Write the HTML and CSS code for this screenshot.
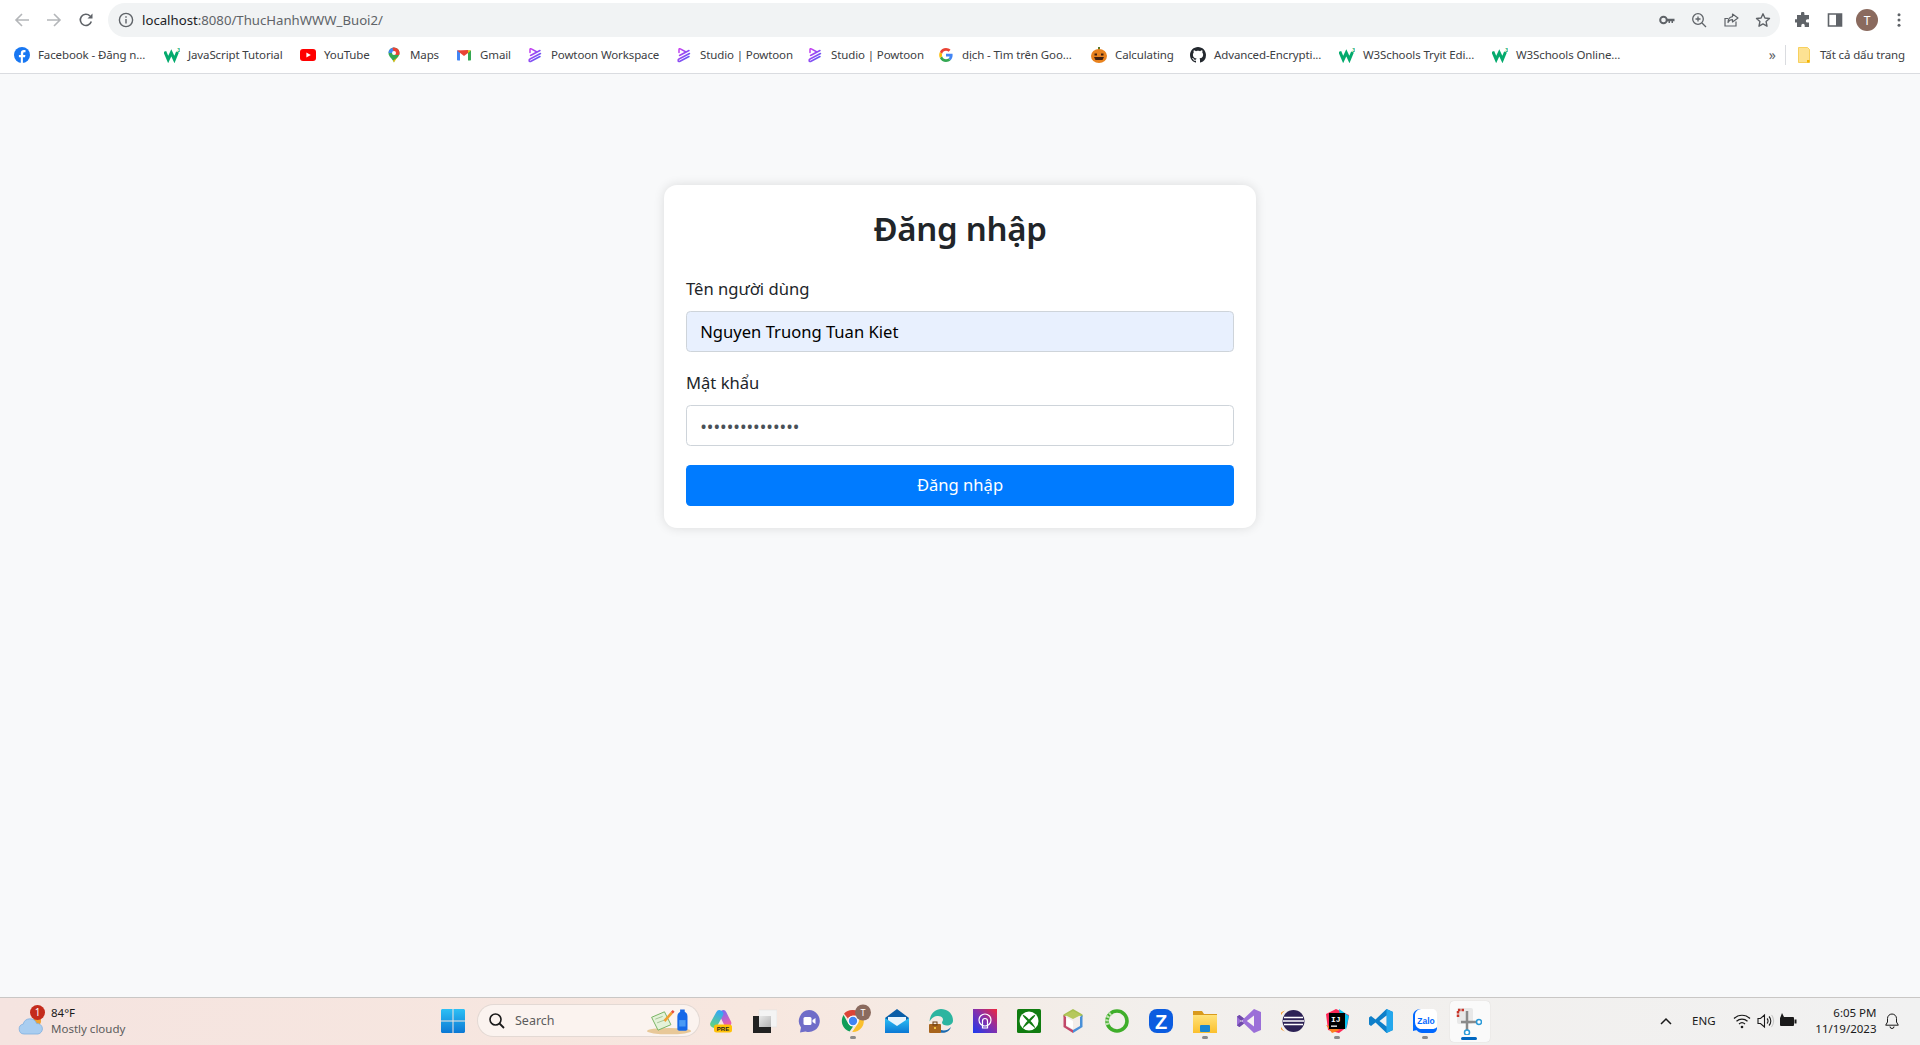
FILE: index.html
```html
<!DOCTYPE html>
<html lang="vi">
<head>
    <meta charset="UTF-8">
    <meta name="viewport" content="width=device-width, initial-scale=1.0">
    <title>Đăng nhập</title>
    <link rel="stylesheet" href="styles.css">
</head>
<body>
    <svg class="sprites" aria-hidden="true">
        <defs>
            <linearGradient id="powtoonGrad" x1="0" y1="0" x2="1" y2="1">
                <stop offset="0" stop-color="#d13cf0"/>
                <stop offset="1" stop-color="#4a5cf5"/>
            </linearGradient>
            <linearGradient id="copilotLeft" gradientUnits="userSpaceOnUse" x1="11" y1="3" x2="5" y2="17">
                <stop offset="0" stop-color="#35a8f1"/>
                <stop offset="1" stop-color="#5fd08a"/>
            </linearGradient>
            <linearGradient id="copilotRight" gradientUnits="userSpaceOnUse" x1="13" y1="3" x2="18" y2="15">
                <stop offset="0" stop-color="#7f6bf0"/>
                <stop offset="1" stop-color="#e85fb0"/>
            </linearGradient>
            <linearGradient id="blueGrad" x1="0" y1="0" x2="0" y2="1">
                <stop offset="0" stop-color="#2dc0f5"/>
                <stop offset="1" stop-color="#0b78d4"/>
            </linearGradient>
            <linearGradient id="filesGrad" x1="0" y1="0" x2="0" y2="1">
                <stop offset="0" stop-color="#ffe27a"/>
                <stop offset="1" stop-color="#fbc02d"/>
            </linearGradient>
            <linearGradient id="tileGrad" x1="0" y1="0" x2="1" y2="1">
                <stop offset="0" stop-color="#e8e8e8"/>
                <stop offset="1" stop-color="#b4b4b4"/>
            </linearGradient>
            <linearGradient id="podcastGrad" x1="0" y1="1" x2="1" y2="0">
                <stop offset="0" stop-color="#1b3bf0"/>
                <stop offset="0.55" stop-color="#8a2fa8"/>
                <stop offset="1" stop-color="#f0283c"/>
            </linearGradient>
            <clipPath id="pinClip">
                <path d="M8 .5A5.500 5.500 0 0 0 2.500 6c0 4 4 5.500 5.500 9.500C9.500 11.500 13.500 10 13.500 6A5.500 5.500 0 0 0 8 .5z"/>
            </clipPath>
            <symbol id="w3" viewBox="0 0 16 16">
                <path d="M.8 4.500L4.200 12.500 7.300 5.800 10.400 12.500 13.500 5" fill="none" stroke="#04aa6d" stroke-width="3"/>
                <text class="w3-sup" x="13.200" y="4.500">3</text>
            </symbol>
            <symbol id="powtoon" viewBox="0 0 16 16">
                <path d="M3 5.500V2.500c0-.8.7-1 1.300-.7L10 5 3.500 8.500 13 3.500M13.500 6.500L3 12c-1.500.8-1 3 .5 2.500L13 9.500" fill="none" stroke="url(#powtoonGrad)" stroke-width="1.500" stroke-linecap="round" stroke-linejoin="round"/>
            </symbol>
        </defs>
    </svg>

    <div class="toolbar">
        <button class="tool-btn muted">
            <svg width="16" height="16" viewBox="0 0 16 16"><path d="M15 8H2.500M8 2L2 8l6 6" fill="none" stroke="currentColor" stroke-width="1.600"/></svg>
        </button>
        <button class="tool-btn muted">
            <svg width="16" height="16" viewBox="0 0 16 16"><path d="M1 8h12.500M8 2l6 6-6 6" fill="none" stroke="currentColor" stroke-width="1.600"/></svg>
        </button>
        <button class="tool-btn">
            <svg width="16" height="16" viewBox="0 0 16 16"><path d="M13.300 9.500A5.600 5.600 0 1 1 12 4" fill="none" stroke="currentColor" stroke-width="1.600"/><path d="M14.500 1.500v5h-5z" fill="currentColor"/></svg>
        </button>
        <div class="omnibox">
            <svg class="info-icon" width="16" height="16" viewBox="0 0 16 16"><circle cx="8" cy="8" r="6.600" fill="none" stroke="currentColor" stroke-width="1.400"/><path d="M7.300 7h1.400v4.600H7.300zM7.300 4.300h1.400v1.500H7.300z" fill="currentColor"/></svg>
            <div class="url"><span class="url-host">localhost</span>:8080/ThucHanhWWW_Buoi2/</div>
            <div class="omni-actions">
                <button class="tool-btn">
                    <svg width="16" height="16" viewBox="0 0 16 16"><circle cx="4.500" cy="8" r="3.300" fill="none" stroke="currentColor" stroke-width="2"/><path d="M7.500 6.800H15.500V9.300H14V11H12.500V9.300H11V11H9.500V9.300H7.500z" fill="currentColor"/></svg>
                </button>
                <button class="tool-btn">
                    <svg width="16" height="16" viewBox="0 0 16 16"><circle cx="7" cy="7" r="5.300" fill="none" stroke="currentColor" stroke-width="1.300"/><path d="M11 11l4 4M7 4.500v5M4.500 7h5" fill="none" stroke="currentColor" stroke-width="1.300"/></svg>
                </button>
                <button class="tool-btn">
                    <svg width="16" height="16" viewBox="0 0 16 16"><path d="M13 9.500V14H2V6.500h3" fill="none" stroke="currentColor" stroke-width="1.200"/><path d="M9.500 2l5.500 4-5.500 4V7.700C7.500 7.700 6 8.500 5 10.500c0-3.500 1.800-5.500 4.500-5.900z" fill="none" stroke="currentColor" stroke-width="1.200" stroke-linejoin="round"/></svg>
                </button>
                <button class="tool-btn">
                    <svg width="16" height="16" viewBox="0 0 16 16"><path d="M8 1.800l1.900 4.200 4.600.5-3.400 3.100.9 4.600L8 11.900l-4 2.300.9-4.600L1.500 6.500 6.100 6z" fill="none" stroke="currentColor" stroke-width="1.400" stroke-linejoin="round"/></svg>
                </button>
            </div>
        </div>
        <div class="toolbar-end">
            <button class="tool-btn">
                <svg width="16" height="16" viewBox="0 0 16 16"><path d="M6 1.500a1.700 1.700 0 0 1 3.400 0V3H14v4.200h-1.500a1.700 1.700 0 0 0 0 3.400H14V15H9.700v-1.500a1.700 1.700 0 0 0-3.400 0V15H2v-4.400H.8a1.700 1.700 0 0 1 0-3.400H2V3h4z" fill="currentColor"/></svg>
            </button>
            <button class="tool-btn">
                <svg width="16" height="16" viewBox="0 0 16 16"><path d="M1.500 2h13v12h-13z" fill="#fff" stroke="currentColor" stroke-width="1.600"/><path d="M9 2h5.500v12H9z" fill="currentColor"/></svg>
            </button>
            <button class="tool-btn">
                <span class="avatar">T</span>
            </button>
            <button class="tool-btn">
                <svg width="16" height="16" viewBox="0 0 16 16"><circle cx="8" cy="2.800" r="1.500" fill="currentColor"/><circle cx="8" cy="8" r="1.500" fill="currentColor"/><circle cx="8" cy="13.200" r="1.500" fill="currentColor"/></svg>
            </button>
        </div>
    </div>

    <div class="bookmarks">
        <div class="bm-list">
            <div class="bm">
                <svg width="16" height="16" viewBox="0 0 16 16"><circle cx="8" cy="8" r="8" fill="#1877f2"/><path d="M6.800 16V10.300H4.900V8h1.900V6.200c0-2 1.200-3.100 3-3.100.9 0 1.700.1 1.700.1v2h-1c-1 0-1.300.6-1.300 1.200V8h2.200l-.4 2.300H8.900V16z" fill="#fff"/></svg>
                <span>Facebook - Đăng n...</span>
            </div>
            <div class="bm"><svg width="16" height="16"><use href="#w3"/></svg><span>JavaScript Tutorial</span></div>
            <div class="bm">
                <svg width="16" height="16" viewBox="0 0 16 16"><rect y="2" width="16" height="12" rx="3" fill="#f00"/><path d="M6.400 5.500L10.800 8l-4.400 2.500z" fill="#fff"/></svg>
                <span>YouTube</span>
            </div>
            <div class="bm">
                <svg width="16" height="16" viewBox="0 0 16 16">
                    <g clip-path="url(#pinClip)">
                        <rect width="16" height="16" fill="#34a853"/>
                        <path d="M0 0h8v6H0z" fill="#4285f4"/>
                        <path d="M6 0h10v8H9z" fill="#ea4335"/>
                        <path d="M16 7L4 16h12z" fill="#fbbc04"/>
                    </g>
                    <circle cx="8" cy="6" r="2" fill="#fff"/>
                </svg>
                <span>Maps</span>
            </div>
            <div class="bm">
                <svg width="16" height="16" viewBox="0 0 16 16"><path d="M1 3.500h3v10H2c-.6 0-1-.4-1-1z" fill="#4285f4"/><path d="M12 3.500h3v9c0 .6-.4 1-1 1h-2z" fill="#34a853"/><path d="M1 3.500l7 5.500 4-3.100V3z" fill="#ea4335"/><path d="M12 3.500h3L12 6z" fill="#fbbc04"/></svg>
                <span>Gmail</span>
            </div>
            <div class="bm"><svg width="16" height="16"><use href="#powtoon"/></svg><span>Powtoon Workspace</span></div>
            <div class="bm"><svg width="16" height="16"><use href="#powtoon"/></svg><span>Studio | Powtoon</span></div>
            <div class="bm"><svg width="16" height="16"><use href="#powtoon"/></svg><span>Studio | Powtoon</span></div>
            <div class="bm">
                <svg width="16" height="16" viewBox="0 0 16 16"><path d="M14.600 8.200c0-.5 0-1-.1-1.400H8v2.700h3.700c-.2.900-.6 1.600-1.300 2.100l2.100 1.600c1.300-1.200 2.100-2.900 2.100-5z" fill="#4285f4"/><path d="M8 15c1.900 0 3.400-.6 4.500-1.700l-2.100-1.700c-.6.400-1.400.7-2.400.7-1.800 0-3.400-1.300-3.900-3L1.900 11C3 13.400 5.300 15 8 15z" fill="#34a853"/><path d="M4.100 9.300C4 8.900 3.900 8.400 3.900 8s.1-.9.200-1.300L1.900 5C1.400 5.900 1.200 6.900 1.200 8s.2 2.100.7 3z" fill="#fbbc05"/><path d="M8 3.700c1 0 1.900.4 2.600 1l1.900-1.900C11.400 1.700 9.800 1 8 1 5.300 1 3 2.600 1.900 5l2.200 1.700c.5-1.700 2.100-3 3.900-3z" fill="#ea4335"/></svg>
                <span>dịch - Tìm trên Goo...</span>
            </div>
            <div class="bm">
                <svg width="16" height="16" viewBox="0 0 16 16"><rect x="7" y="0" width="2" height="3.500" fill="#5a7a2a"/><ellipse cx="8" cy="9" rx="8" ry="7" fill="#e8821e"/><path d="M3.500 6.500h2.500v2H3.500zM10 6.500h2.500v2H10zM3 10h10L11.500 13h-7z" fill="#402010"/></svg>
                <span>Calculating</span>
            </div>
            <div class="bm">
                <svg width="16" height="16" viewBox="0 0 16 16"><path fill="#24292f" d="M8 0C3.580 0 0 3.580 0 8c0 3.540 2.290 6.530 5.470 7.590.4.070.55-.170.55-.380 0-.190-.010-.820-.010-1.490-2.010.370-2.530-.490-2.690-.940-.090-.230-.480-.940-.820-1.130-.280-.150-.680-.520-.010-.530.630-.010 1.080.580 1.230.820.720 1.210 1.870.870 2.330.660.070-.520.280-.870.510-1.070-1.780-.200-3.640-.890-3.640-3.950 0-.870.310-1.590.820-2.150-.080-.200-.360-1.020.080-2.120 0 0 .670-.210 2.200.820.640-.180 1.320-.270 2-.270.680 0 1.360.090 2 .270 1.530-1.040 2.200-.820 2.200-.820.440 1.100.160 1.920.080 2.120.510.560.820 1.270.820 2.150 0 3.070-1.870 3.750-3.650 3.950.290.250.540.730.540 1.480 0 1.070-.010 1.930-.010 2.200 0 .210.150.460.550.380A8.013 8.013 0 0 0 16 8c0-4.420-3.580-8-8-8z"/></svg>
                <span>Advanced-Encrypti...</span>
            </div>
            <div class="bm"><svg width="16" height="16"><use href="#w3"/></svg><span>W3Schools Tryit Edi...</span></div>
            <div class="bm"><svg width="16" height="16"><use href="#w3"/></svg><span>W3Schools Online...</span></div>
        </div>
        <div class="bm-end">
            <span class="bm-more">»</span>
            <span class="bm-sep"></span>
            <div class="bm">
                <svg width="16" height="16" viewBox="0 0 16 16"><path d="M2.500 .5h9l2 2V15.500h-11z" fill="#fde293" stroke="#f5c842" stroke-width=".8"/><path d="M11 13h2.500v2.500H11z" fill="#f5b400"/></svg>
                <span>Tất cả dấu trang</span>
            </div>
        </div>
    </div>

    <main class="page">
        <div class="login-card">
            <h2>Đăng nhập</h2>
            <form>
                <div class="form-group">
                    <label for="username">Tên người dùng</label>
                    <input class="form-control autofilled" id="username" type="text" value="Nguyen Truong Tuan Kiet">
                </div>
                <div class="form-group">
                    <label for="password">Mật khẩu</label>
                    <input class="form-control password" id="password" type="password" value="123456789012345">
                </div>
                <button class="btn-submit" type="button">Đăng nhập</button>
            </form>
        </div>
    </main>

    <footer class="taskbar">
        <div class="weather">
            <svg class="weather-icon" width="28" height="24" viewBox="0 0 28 24"><circle cx="20" cy="8" r="4" fill="#f0a030"/><path d="M7 21a5 5 0 0 1-.8-9.900 7 7 0 0 1 13.400-.6A5.300 5.300 0 0 1 21 21z" fill="#a9cdf0" stroke="#7fb0e0" stroke-width=".8"/></svg>
            <span class="weather-badge">1</span>
            <div class="weather-text">
                <div class="weather-temp">84°F</div>
                <div class="weather-desc">Mostly cloudy</div>
            </div>
        </div>

        <svg class="start-icon" width="24" height="24" viewBox="0 0 24 24">
            <path d="M0 1.500C0 .700.700 0 1.500 0H11.500V11.500H0zM12.500 0H22.500C23.300 0 24 .700 24 1.500V11.500H12.500zM0 12.500H11.500V24H1.500C.700 24 0 23.300 0 22.500zM12.500 12.500H24V22.500C24 23.300 23.300 24 22.500 24H12.500z" fill="url(#blueGrad)"/>
        </svg>

        <div class="search">
            <svg width="18" height="18" viewBox="0 0 18 18"><circle cx="7.500" cy="7.500" r="5.500" fill="none" stroke="#1a1a1a" stroke-width="1.600"/><path d="M11.500 11.500L16 16" stroke="#1a1a1a" stroke-width="1.800"/></svg>
            <span class="search-label">Search</span>
            <svg class="search-art" width="46" height="28" viewBox="0 0 50 30">
                <ellipse cx="24" cy="26" rx="24" ry="3.500" fill="#e8c898"/>
                <path d="M5 11l14-6 7 14-14 6z" fill="#e4f2d8" stroke="#6fae5a" stroke-width="1"/>
                <path d="M9 13l8-3M11 17l8-3" stroke="#9fbf90" stroke-width="1"/>
                <path d="M18 14l8-9 2 2-8 9z" fill="#f0a030"/>
                <path d="M26 5l2-2 2 2-2 2z" fill="#e84e3c"/>
                <path d="M33 24V10c0-3 2-4 3-5V2.500h5V5c1.500 1 3 2 3 5v14c0 1-1 1.500-2 1.500h-7c-1 0-2-.5-2-1.500z" fill="#1668e8"/>
                <path d="M35 14h7v7h-7z" fill="#4a9af5"/>
            </svg>
        </div>

        <div class="apps">
            <div class="app">
                <svg width="24" height="24" viewBox="0 0 24 24">
                    <path d="M14 5l4.500 9" fill="none" stroke="url(#copilotRight)" stroke-width="7.500" stroke-linecap="round"/>
                    <path d="M10.500 5L5 15" fill="none" stroke="url(#copilotLeft)" stroke-width="7.500" stroke-linecap="round"/>
                    <rect x="5" y="15.500" width="18" height="8" rx="2.500" fill="#ffc107"/>
                    <text class="pre-text" x="14" y="21.800" text-anchor="middle">PRE</text>
                </svg>
            </div>
            <div class="app">
                <svg width="24" height="24" viewBox="0 0 24 24"><path d="M6 1h18v17H6z" fill="#f4f4f4" stroke="#e2e2e2" stroke-width=".6"/><path d="M0 7h18v17H0z" fill="#222"/><path d="M6 7h12v11H6z" fill="url(#tileGrad)"/></svg>
            </div>
            <div class="app">
                <svg width="24" height="24" viewBox="0 0 24 24"><path d="M12 1a11 11 0 1 1-3.500 21.500L3 23.500l1-5A11 11 0 0 1 12 1z" fill="#6f6dc8"/><rect x="6.500" y="8" width="8" height="8" rx="1.500" fill="#fff"/><path d="M15.500 11l3-2v6l-3-2z" fill="#fff"/></svg>
            </div>
            <div class="app">
                <svg class="app-overflow" width="24" height="24" viewBox="0 0 24 24">
                    <path d="M12 1a11 11 0 0 1 9.500 5.500H12a5.500 5.500 0 0 0-5 3.200L3 4.700A11 11 0 0 1 12 1z" fill="#db4437"/>
                    <path d="M2.600 6l4.700 8.700a5.500 5.500 0 0 0 4.800 2.800l-3.500 5A11 11 0 0 1 2.600 6z" fill="#0f9d58"/>
                    <path d="M21.900 7.500h-5.400a5.500 5.500 0 0 1 .3 7.200L11.200 23A11 11 0 0 0 21.900 7.500z" fill="#fbc02d"/>
                    <circle cx="12" cy="12" r="5.200" fill="#fff"/>
                    <circle cx="12" cy="12" r="4.200" fill="#4285f4"/>
                    <circle cx="22" cy="3.500" r="8" fill="#8a6a5e"/>
                    <text class="chrome-t" x="22" y="6.700" text-anchor="middle">T</text>
                </svg>
                <span class="app-dot"></span>
            </div>
            <div class="app">
                <svg width="24" height="24" viewBox="0 0 24 24"><path d="M0 9L12 0l12 9v15H0z" fill="#0a5ea8"/><path d="M3 8h18v7l-9 5-9-5z" fill="#e8f4fc"/><path d="M0 9l12 8 12-8v15H0z" fill="url(#blueGrad)"/></svg>
            </div>
            <div class="app">
                <svg width="24" height="24" viewBox="0 0 24 24"><path d="M12 0c7 0 12 5 12 11.500 0 3.500-3 5-6 5-2.500 0-5-1-5-3 0-1 1-1.500 1-3 0-2.500-3-4-6-3.500C4 7.500 2 10 .5 12.500 1 5 6 0 12 0z" fill="#2cb5a0"/><path d="M12 21c3 1 7 .5 10-3-2 6-7 6-11 5.500z" fill="#1a6ab0"/><rect x="0" y="15" width="12" height="9" rx="1" fill="#a8641c"/><rect x="4" y="13" width="4" height="3" fill="none" stroke="#6a3d10"/><rect x="5" y="18" width="2" height="2" fill="#f0c040"/></svg>
            </div>
            <div class="app">
                <svg width="24" height="24" viewBox="0 0 24 24"><rect width="24" height="24" fill="url(#podcastGrad)"/><circle cx="12" cy="11" r="6" fill="none" stroke="#fff" stroke-width="1.200"/><path d="M9.500 19v-7a2.500 2.500 0 0 1 5 0v7z" fill="none" stroke="#fff" stroke-width="1.200"/></svg>
            </div>
            <div class="app">
                <svg width="24" height="24" viewBox="0 0 24 24"><rect width="24" height="24" rx="1.500" fill="#107c10"/><circle cx="12" cy="12" r="9.500" fill="#fff"/><path d="M5.500 5.500c3 1 5 3.500 6.500 5 1.500-1.500 3.500-4 6.500-5-1 3-3.500 5-5 6.500 2 2 4 4.500 5 7.500L12 14 5.500 19.500c1-3 3-5.500 5-7.500-1.500-1.500-4-3.500-5-6.500z" fill="#107c10"/></svg>
            </div>
            <div class="app">
                <svg width="24" height="24" viewBox="0 0 24 24"><path d="M12 0l9.500 5.500V8L12 3 2.500 8V5.500z" fill="#a8c050"/><path d="M4 6l8-4 8 4-8 4z" fill="#b6c85c"/><path d="M2.500 6v12L12 24v-3L5 17V8z" fill="#c2486a"/><path d="M21.500 6v12L12 24v-3l7-4V8z" fill="#4a90d8"/><path d="M5.500 8.500L12 12v8l-6.500-3.500z" fill="#fff"/></svg>
            </div>
            <div class="app">
                <svg width="24" height="24" viewBox="0 0 24 24"><circle cx="12" cy="12" r="10" fill="none" stroke="#3fae2a" stroke-width="3.600"/><path d="M6 4.500A10 10 0 0 0 3 17" fill="none" stroke="#bfe3b0" stroke-width="3.600" stroke-dasharray="2 1.500"/></svg>
            </div>
            <div class="app">
                <svg width="24" height="24" viewBox="0 0 24 24"><rect width="24" height="24" rx="8" fill="#0b5ce0"/><text class="zoho-z" x="12" y="19.500" text-anchor="middle">Z</text></svg>
            </div>
            <div class="app">
                <svg width="24" height="24" viewBox="0 0 24 24"><path d="M0 2h9l2 3h13v19H0z" fill="#d99a1c"/><path d="M0 6h24v18H0z" fill="url(#filesGrad)"/><rect x="7" y="16" width="10" height="7" rx="1" fill="#1a86d0"/></svg>
                <span class="app-dot"></span>
            </div>
            <div class="app">
                <svg width="24" height="24" viewBox="0 0 24 24"><path d="M17 0l7 3v18l-7 3-10-9.500L2.500 18 0 16.500v-9L2.500 6 7 9.500z" fill="#9b6fd8"/><path d="M17 6.500v11L9.800 12z" fill="#f5f2f2"/><path d="M3 9v6l3-3z" fill="#f5f2f2"/><path d="M0 7.500L2.500 6 7 9.500 4 12zM0 16.500L2.500 18 7 14.500 4 12z" fill="#6f4aa8"/></svg>
            </div>
            <div class="app">
                <svg width="24" height="24" viewBox="0 0 24 24"><circle cx="12.500" cy="12" r="11" fill="#2c2255"/><path d="M4 1.500A11 11 0 0 0 4 22.500 13 13 0 0 1 4 1.500z" fill="#f7941e"/><path d="M3 8.500h19M2 12h21M3 15.500h19" stroke="#fff" stroke-width="1.300"/></svg>
            </div>
            <div class="app">
                <svg width="24" height="24" viewBox="0 0 24 24"><path d="M1 5l10-5 13 6-2 12-8 6-11-3z" fill="#fe2857"/><path d="M14 0l10 7-3 14-6-14z" fill="#07c3f2"/><path d="M1 16l6 8 8-3z" fill="#fc801d"/><rect x="4" y="4" width="16" height="16" fill="#000"/><text class="ij-text" x="6" y="12.500">IJ</text><rect x="6" y="16.500" width="6" height="1.300" fill="#fff"/></svg>
                <span class="app-dot"></span>
            </div>
            <div class="app">
                <svg width="24" height="24" viewBox="0 0 24 24"><path d="M17.500 0L24 3v18l-6.500 3-11-10.500L2 17 0 15.500v-7L2 7l4.500 3.500z" fill="#0e7fc9"/><path d="M17.500 0L24 3v18l-6.500 3z" fill="#24a7ec"/><path d="M17.500 6.500L10.500 12l7 5.500z" fill="#f2f2f2"/></svg>
            </div>
            <div class="app">
                <svg width="24" height="24" viewBox="0 0 24 24"><path d="M8 0C3 0 0 3 0 7v10c0 2 .5 3-1 5 2 0 4-1 5-.5 1 1.500 3 2.500 5 2.500h10c3 0 5-2 5-5v-1H8z" fill="#0068ff"/><path d="M8 0h11c3 0 5 2 5 5v13c-1 1.500-3 2-5 2H7c-3-1-5-3.500-5-7V6c0-3 3-6 6-6z" fill="#fff"/><text class="zalo-text" x="13" y="14.500" text-anchor="middle">Zalo</text></svg>
                <span class="app-dot"></span>
            </div>
            <div class="app app-active">
                <svg width="26" height="28" viewBox="0 0 26 28"><rect x="1" y="1" width="16" height="16" rx="2" fill="#e8e8e8"/><path d="M2 10V3h7" fill="none" stroke="#c8352a" stroke-width="2.500" stroke-dasharray="2.500 1"/><path d="M11 4v23M5 15h18" stroke="#8a8a8a" stroke-width="2.500"/><circle cx="23" cy="15" r="2.500" fill="#fff" stroke="#2a9ad8" stroke-width="1.500"/><circle cx="11" cy="25.500" r="2.500" fill="#fff" stroke="#2a9ad8" stroke-width="1.500"/></svg>
                <span class="app-bar"></span>
            </div>
        </div>

        <div class="tray">
            <svg class="tray-caret" width="14" height="10" viewBox="0 0 14 10"><path d="M2 8l5-5 5 5" fill="none" stroke="#1a1a1a" stroke-width="1.500"/></svg>
            <span class="tray-lang">ENG</span>
            <svg class="tray-wifi" width="18" height="16" viewBox="0 0 18 16"><path d="M1 5.500a11.500 11.500 0 0 1 16 0M3.500 8.300a8 8 0 0 1 11 0M6 11a4.500 4.500 0 0 1 6 0" fill="none" stroke="#1a1a1a" stroke-width="1.200"/><circle cx="9" cy="14" r="1.300" fill="#1a1a1a"/></svg>
            <svg class="tray-vol" width="18" height="16" viewBox="0 0 18 16"><path d="M1 5.500h2.500L7.500 2v12l-4-3.500H1z" fill="none" stroke="#1a1a1a" stroke-width="1.100"/><path d="M10 5.500a3.500 3.500 0 0 1 0 5M12 3.500a6.500 6.500 0 0 1 0 9" fill="none" stroke="#1a1a1a" stroke-width="1.100"/><path d="M14.500 2a9.500 9.500 0 0 1 0 12" fill="none" stroke="#c8c8c8" stroke-width="1.100"/></svg>
            <svg class="tray-batt" width="18" height="16" viewBox="0 0 18 16"><rect x="1" y="4" width="14" height="9" rx="1" fill="#1a1a1a"/><rect x="15.500" y="6.500" width="2" height="4" fill="#1a1a1a"/><path d="M3 0L1.500 4H5z" fill="#1a1a1a"/></svg>
            <div class="clock">
                <div>6:05 PM</div>
                <div>11/19/2023</div>
            </div>
            <svg class="tray-bell" width="16" height="16" viewBox="0 0 16 16"><path d="M8 1a4.500 4.500 0 0 1 4.500 4.500V9l1.800 3.200H1.700L3.500 9V5.500A4.500 4.500 0 0 1 8 1z" fill="none" stroke="#1a1a1a" stroke-width="1"/><path d="M6 13.500a2 2 0 0 0 4 0" fill="none" stroke="#1a1a1a" stroke-width="1"/></svg>
        </div>
    </footer>
</body>
</html>
```

FILE: styles.css
```css
* {
    box-sizing: border-box;
}
html, body {
    height: 100%;
}
body {
    margin: 0;
    display: flex;
    flex-direction: column;
    overflow: hidden;
    background-color: #f8f9fa;
    font-family: "Noto Sans", Arial, sans-serif;
    color: #212529;
}
button {
    font-family: inherit;
}
.sprites {
    position: absolute;
    width: 0;
    height: 0;
}
.w3-sup {
    font: bold 5px "Liberation Sans", sans-serif;
    fill: #04aa6d;
}

/* browser chrome */
.toolbar {
    display: flex;
    align-items: center;
    height: 37px;
    padding: 3px 5px 0 6px;
    background: #fff;
    flex: none;
}
.tool-btn {
    display: flex;
    align-items: center;
    justify-content: center;
    width: 32px;
    height: 32px;
    padding: 0;
    border: 0;
    background: none;
    color: #5f6368;
    flex: none;
}
.tool-btn.muted {
    color: #b4b6b9;
}
.omnibox {
    display: flex;
    align-items: center;
    flex: 1;
    height: 34px;
    margin: 0 7px 0 6px;
    padding: 0 1px 0 10px;
    border-radius: 17px;
    background: #f1f3f4;
}
.info-icon {
    color: #5f6368;
    flex: none;
}
.url {
    margin-left: 8px;
    font-size: 13.2px;
    color: #5f6368;
}
.url-host {
    color: #202124;
}
.omni-actions {
    display: flex;
    margin-left: auto;
}
.toolbar-end {
    display: flex;
}
.avatar {
    display: flex;
    align-items: center;
    justify-content: center;
    width: 22px;
    height: 22px;
    border-radius: 50%;
    background: #8a6a5e;
    color: #fff;
    font-size: 12px;
}

.bookmarks {
    display: flex;
    align-items: center;
    height: 37px;
    padding: 0 15px 1px 14px;
    background: #fff;
    border-bottom: 1px solid #dadce0;
    flex: none;
}
.bm-list {
    display: grid;
    grid-template-columns: 150px 136px 86px 70px 71px 149px 131px 131px 153px 99px 149px 153px auto;
}
.bm {
    display: flex;
    align-items: center;
    gap: 8px;
    font-size: 11.5px;
    letter-spacing: -0.12px;
    color: #3c4043;
    white-space: nowrap;
}
.bm svg {
    flex: none;
}
.bm-end {
    display: flex;
    align-items: center;
    margin-left: auto;
}
.bm-more {
    font-size: 14px;
    color: #5f6368;
}
.bm-sep {
    width: 1px;
    height: 20px;
    margin: 0 10px 0 9px;
    background: #dadce0;
}

/* login form */
.page {
    flex: 1;
    display: flex;
    justify-content: center;
    align-items: flex-start;
    padding-top: 111px;
}
.login-card {
    width: 592px;
    padding: 22px;
    background: #fff;
    border-radius: 13px;
    box-shadow: 0 0 11px rgba(0, 0, 0, 0.12);
}
.login-card h2 {
    margin: 0 0 25.4px;
    padding-top: 1px;
    font-size: 33px;
    line-height: 42.2px;
    font-weight: 600;
    letter-spacing: -0.3px;
    text-align: center;
}
.form-group {
    margin-bottom: 18.3px;
}
.form-group label {
    display: block;
    margin-bottom: 8.8px;
    font-size: 16.6px;
    line-height: 26.4px;
}
.form-control {
    display: block;
    width: 100%;
    height: 41px;
    padding: 6.6px 13.2px;
    font-family: inherit;
    font-size: 16.6px;
    color: #495057;
    background: #fff;
    border: 1.1px solid #ced4da;
    border-radius: 4.4px;
}
.form-control.autofilled {
    background: #e8f0fe;
    color: #000;
}
.form-control.password {
    font-size: 17.6px;
}
.btn-submit {
    display: block;
    width: 100%;
    height: 41px;
    padding: 0 0 2px;
    font-size: 16.6px;
    color: #fff;
    background: #007bff;
    border: 0;
    border-radius: 4.4px;
}

/* windows taskbar */
.taskbar {
    display: flex;
    align-items: center;
    height: 48px;
    padding-bottom: 2px;
    border-top: 1px solid #c9c7c5;
    background: linear-gradient(90deg, #f5e4e0 0%, #f7e7df 40%, #f2efec 60%, #f1f1f1 100%);
    flex: none;
}
.weather {
    position: relative;
    display: flex;
    align-items: center;
    width: 441px;
    padding-left: 51px;
    flex: none;
}
.weather-icon {
    position: absolute;
    left: 17px;
    top: 8px;
}
.weather-badge {
    position: absolute;
    left: 30px;
    top: 0;
    display: flex;
    align-items: center;
    justify-content: center;
    width: 15px;
    height: 15px;
    border-radius: 50%;
    background: #c42b1c;
    color: #fff;
    font-size: 10px;
}
.weather-text {
    font-size: 11.5px;
    line-height: 16px;
}
.weather-temp {
    color: #1a1a1a;
}
.weather-desc {
    color: #5c5c5c;
}
.start-icon {
    flex: none;
}
.search {
    display: flex;
    align-items: center;
    width: 221px;
    height: 31px;
    margin-left: 13px;
    padding: 0 6px 0 10px;
    border-radius: 16px;
    background: #fbf3ef;
    box-shadow: 0 0 0 1px #e3d9d4;
    flex: none;
}
.search-label {
    margin-left: 9px;
    font-size: 12.5px;
    color: #5c5c5c;
}
.search-art {
    margin-left: auto;
}
.apps {
    display: flex;
    height: 100%;
    flex: none;
}
.app {
    position: relative;
    display: flex;
    align-items: center;
    justify-content: center;
    width: 44px;
    height: 100%;
}
.app-overflow {
    overflow: visible;
}
.app-dot {
    position: absolute;
    left: 19px;
    bottom: 4px;
    width: 6px;
    height: 3px;
    border-radius: 2px;
    background: #8a8a8a;
}
.app-active::before {
    content: "";
    position: absolute;
    left: 3px;
    right: 1px;
    top: 3px;
    bottom: 1px;
    border-radius: 4px;
    background: #fafafa;
    box-shadow: 0 0 1px rgba(0, 0, 0, 0.2);
}
.app-active svg {
    position: relative;
}
.app-bar {
    position: absolute;
    left: 14px;
    bottom: 3px;
    width: 16px;
    height: 3px;
    border-radius: 2px;
    background: #0067c0;
}
.pre-text {
    font: bold 6px "Liberation Sans", sans-serif;
    fill: #222;
}
.chrome-t {
    font: 9px "Noto Sans", sans-serif;
    fill: #fff;
}
.zoho-z {
    font: bold 20px "Liberation Sans", sans-serif;
    fill: #fff;
}
.ij-text {
    font: bold 8px "Liberation Mono", monospace;
    fill: #fff;
}
.zalo-text {
    font: bold 8.5px "Liberation Sans", sans-serif;
    fill: #0068ff;
}
.tray {
    display: flex;
    align-items: center;
    flex: 1;
    padding-left: 168px;
    height: 100%;
}
.tray-lang {
    margin-left: 19px;
    font-size: 11.5px;
    color: #1a1a1a;
}
.tray-wifi {
    margin-left: 17px;
}
.tray-vol {
    margin-left: 6px;
}
.tray-batt {
    margin-left: 4px;
}
.clock {
    width: 68px;
    margin-left: 12px;
    text-align: right;
    font-size: 11.5px;
    line-height: 16px;
    color: #1a1a1a;
}
.tray-bell {
    margin-left: 7px;
}
```
